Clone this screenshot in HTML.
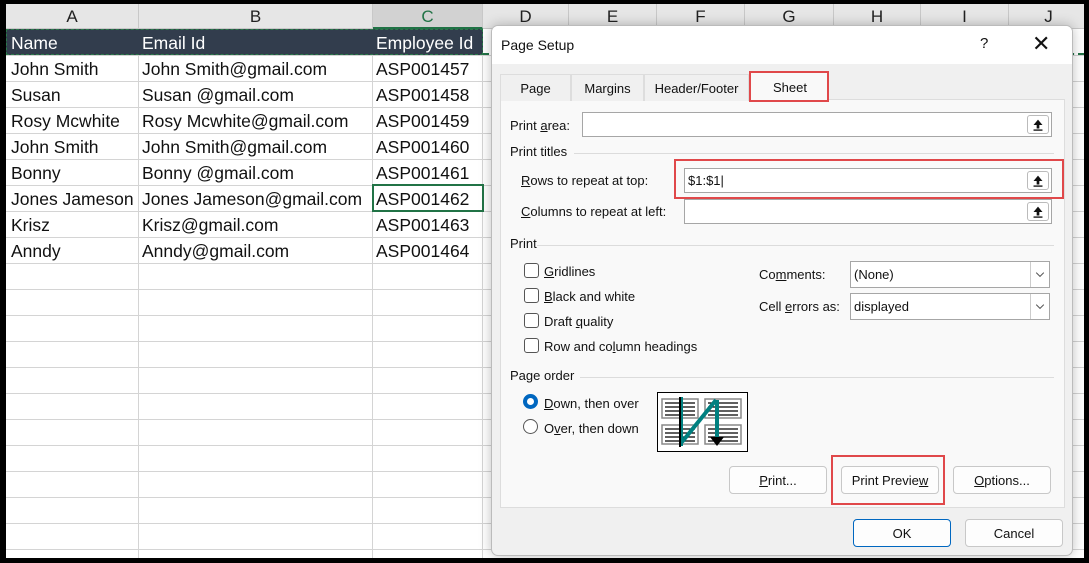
<!DOCTYPE html>
<html><head><style>
*{margin:0;padding:0;box-sizing:border-box}
body{width:1089px;height:563px;background:#000;position:relative;overflow:hidden;font-family:"Liberation Sans",sans-serif}
.a{position:absolute}
.sheet{left:6px;top:4px;width:1078px;height:554px;background:#fff;overflow:hidden}
.ch{position:absolute;top:0;height:25px;background:#e6e6e6;border-right:1px solid #c8c8c8;border-bottom:1px solid #c8c8c8;font-size:17px;color:#222;text-align:center;line-height:26px}
.vl{position:absolute;top:25px;bottom:0;width:1px;background:#d4d4d4}
.hl{position:absolute;left:0;right:0;height:1px;background:#d4d4d4}
.cell{position:absolute;font-size:17.5px;color:#111;line-height:26px;white-space:nowrap}
.dlg{left:491px;top:25px;width:582px;height:531px;background:#f0f0f0;border-radius:7px;border:1px solid #bbb;box-shadow:0 0 12px rgba(0,0,0,.25);overflow:hidden}
.t{position:absolute;font-size:13px;color:#111;white-space:nowrap}
.inp{position:absolute;background:#fff;border:1px solid #a6a6a6;height:25px}
.up{position:absolute;right:2px;top:2px;width:22px;height:19px;border:1px solid #bbb;border-radius:3px;background:#fff}
.cb{position:absolute;width:15px;height:15px;border:1px solid #555;border-radius:3px;background:#fff}
.btn{position:absolute;background:#fdfdfd;border:1px solid #c8c8c8;border-radius:4px;height:28px;font-size:13px;text-align:center;line-height:27px;color:#111}
.red{position:absolute;border:2px solid #e0484a}
.sec{position:absolute;height:1px;background:#dcdcdc}
.tab{position:absolute;top:48px;height:27px;border:1px solid #ddd;border-bottom:none;background:#f0f0f0;font-size:13px;text-align:center;line-height:28px;color:#111}
.dd{position:absolute;right:0;top:0;width:19px;height:25px;border-left:1px solid #ccc}
u{text-decoration:underline}
</style></head><body>
<div class="a sheet">
 <div class="ch" style="left:0;width:133px">A</div>
 <div class="ch" style="left:133px;width:234px">B</div>
 <div class="ch" style="left:367px;width:110px;background:#d2d2d2;color:#217346;border-bottom:2px solid #217346">C</div>
 <div class="ch" style="left:477px;width:86px">D</div>
 <div class="ch" style="left:563px;width:88px">E</div>
 <div class="ch" style="left:651px;width:88px">F</div>
 <div class="ch" style="left:739px;width:89px">G</div>
 <div class="ch" style="left:828px;width:87px">H</div>
 <div class="ch" style="left:915px;width:88px">I</div>
 <div class="ch" style="left:1003px;width:80px">J</div>
 <div class="vl" style="left:132px"></div>
 <div class="vl" style="left:366px"></div>
 <div class="vl" style="left:476px"></div>
 <div class="hl" style="top:51px"></div><div class="hl" style="top:77px"></div><div class="hl" style="top:103px"></div><div class="hl" style="top:129px"></div><div class="hl" style="top:155px"></div><div class="hl" style="top:181px"></div><div class="hl" style="top:207px"></div><div class="hl" style="top:233px"></div><div class="hl" style="top:259px"></div><div class="hl" style="top:285px"></div><div class="hl" style="top:311px"></div><div class="hl" style="top:337px"></div><div class="hl" style="top:363px"></div><div class="hl" style="top:389px"></div><div class="hl" style="top:415px"></div><div class="hl" style="top:441px"></div><div class="hl" style="top:467px"></div><div class="hl" style="top:493px"></div><div class="hl" style="top:519px"></div><div class="hl" style="top:545px"></div>
 <div class="a" style="left:0;top:25px;width:477px;height:26px;background:#323d4d;border:1.5px dashed #2a7a4a"></div>
 <div class="a" style="left:477px;top:49px;width:601px;border-top:2px dashed #217346"></div>
 <div class="cell" style="left:5px;top:26px;color:#fff">Name</div>
 <div class="cell" style="left:136px;top:26px;color:#fff">Email Id</div>
 <div class="cell" style="left:370px;top:26px;color:#fff">Employee Id</div>
 <div class="cell" style="left:5px;top:52px">John Smith</div><div class="cell" style="left:136px;top:52px">John Smith@gmail.com</div><div class="cell" style="left:370px;top:52px">ASP001457</div>
 <div class="cell" style="left:5px;top:78px">Susan</div><div class="cell" style="left:136px;top:78px">Susan @gmail.com</div><div class="cell" style="left:370px;top:78px">ASP001458</div>
 <div class="cell" style="left:5px;top:104px">Rosy Mcwhite</div><div class="cell" style="left:136px;top:104px">Rosy Mcwhite@gmail.com</div><div class="cell" style="left:370px;top:104px">ASP001459</div>
 <div class="cell" style="left:5px;top:130px">John Smith</div><div class="cell" style="left:136px;top:130px">John Smith@gmail.com</div><div class="cell" style="left:370px;top:130px">ASP001460</div>
 <div class="cell" style="left:5px;top:156px">Bonny</div><div class="cell" style="left:136px;top:156px">Bonny @gmail.com</div><div class="cell" style="left:370px;top:156px">ASP001461</div>
 <div class="cell" style="left:5px;top:182px">Jones Jameson</div><div class="cell" style="left:136px;top:182px">Jones Jameson@gmail.com</div><div class="cell" style="left:370px;top:182px">ASP001462</div>
 <div class="cell" style="left:5px;top:208px">Krisz</div><div class="cell" style="left:136px;top:208px">Krisz@gmail.com</div><div class="cell" style="left:370px;top:208px">ASP001463</div>
 <div class="cell" style="left:5px;top:234px">Anndy</div><div class="cell" style="left:136px;top:234px">Anndy@gmail.com</div><div class="cell" style="left:370px;top:234px">ASP001464</div>
 <div class="a" style="left:366px;top:180px;width:112px;height:28px;border:2px solid #217346"></div>
</div>

<svg width="0" height="0" style="position:absolute"><defs>
<symbol id="upi" viewBox="0 0 22 19"><path d="M11 4l-5 6h3.5v4h3v-4H16z" fill="#111"/><rect x="6" y="15" width="10" height="1.5" fill="#111"/></symbol>
<symbol id="chev" viewBox="0 0 19 25"><path d="M5.5 10.5l4 4 4-4" stroke="#555" stroke-width="1" fill="none"/></symbol>
</defs></svg>

<div class="a dlg">
 <div class="a" style="left:0;top:0;right:0;height:38px;background:#fff"></div>
 <div class="t" style="left:9px;top:11px;font-size:14px">Page Setup</div>
 <div class="t" style="left:488px;top:9px;font-size:15px">?</div>
 <div class="t" style="left:540px;top:5px;font-size:22px;font-weight:300">✕</div>
 <div class="a" style="left:8px;top:73px;width:565px;height:409px;background:#f9f9f9;border:1px solid #ddd"></div>
 <div class="tab" style="left:8px;width:71px">Page</div>
 <div class="tab" style="left:79px;width:73px">Margins</div>
 <div class="tab" style="left:152px;width:105px">Header/Footer</div>
 <div class="a" style="left:258px;top:46px;width:78px;height:30px;background:#f9f9f9"></div>
 <div class="t" style="left:281px;top:54px">Sheet</div>
 <div class="red" style="left:257px;top:45px;width:80px;height:31px"></div>
 <div class="t" style="left:18px;top:92px">Print <u>a</u>rea:</div>
 <div class="inp" style="left:90px;top:86px;width:470px"><svg class="up"><use href="#upi"/></svg></div>
 <div class="t" style="left:18px;top:118px">Print titles</div>
 <div class="sec" style="left:82px;top:127px;width:480px"></div>
 <div class="t" style="left:29px;top:147px"><u>R</u>ows to repeat at top:</div>
 <div class="inp" style="left:192px;top:142px;width:368px"><span class="t" style="left:3px;top:4px">$1:$1|</span><svg class="up"><use href="#upi"/></svg></div>
 <div class="red" style="left:182px;top:133px;width:390px;height:40px"></div>
 <div class="t" style="left:29px;top:178px"><u>C</u>olumns to repeat at left:</div>
 <div class="inp" style="left:192px;top:173px;width:368px"><svg class="up"><use href="#upi"/></svg></div>
 <div class="t" style="left:18px;top:210px">Print</div>
 <div class="sec" style="left:45px;top:219px;width:517px"></div>
 <div class="cb" style="left:32px;top:237px"></div><div class="t" style="left:52px;top:238px"><u>G</u>ridlines</div>
 <div class="cb" style="left:32px;top:262px"></div><div class="t" style="left:52px;top:263px"><u>B</u>lack and white</div>
 <div class="cb" style="left:32px;top:287px"></div><div class="t" style="left:52px;top:288px">Draft <u>q</u>uality</div>
 <div class="cb" style="left:32px;top:312px"></div><div class="t" style="left:52px;top:313px">Row and co<u>l</u>umn headings</div>
 <div class="t" style="left:267px;top:241px">Co<u>m</u>ments:</div>
 <div class="inp" style="left:358px;top:235px;width:200px;height:27px"><span class="t" style="left:3px;top:5px">(None)</span><svg class="dd"><use href="#chev"/></svg></div>
 <div class="t" style="left:267px;top:273px">Cell <u>e</u>rrors as:</div>
 <div class="inp" style="left:358px;top:267px;width:200px;height:27px"><span class="t" style="left:3px;top:5px">displayed</span><svg class="dd"><use href="#chev"/></svg></div>
 <div class="t" style="left:18px;top:342px">Page order</div>
 <div class="sec" style="left:88px;top:351px;width:474px"></div>
 <div class="a" style="left:31px;top:368px;width:15px;height:15px;border-radius:50%;background:#0067c0"><div class="a" style="left:4px;top:4px;width:7px;height:7px;border-radius:50%;background:#fff"></div></div>
 <div class="t" style="left:52px;top:370px"><u>D</u>own, then over</div>
 <div class="a" style="left:31px;top:393px;width:15px;height:15px;border-radius:50%;border:1px solid #555;background:#fff"></div>
 <div class="t" style="left:52px;top:395px">O<u>v</u>er, then down</div>
 <svg class="a" style="left:165px;top:366px" width="91" height="60" viewBox="0 0 91 60">
  <rect x="0.5" y="0.5" width="90" height="59" fill="#fff" stroke="#000"/>
  <g fill="#fff" stroke="#888" stroke-width="1.5">
   <rect x="5" y="7" width="36" height="19"/><rect x="48" y="7" width="36" height="19"/>
   <rect x="5" y="33" width="36" height="19"/><rect x="48" y="33" width="36" height="19"/>
  </g>
  <g stroke="#000" stroke-width="1.2">
   <path d="M8 11h30M8 15h30M8 19h30M8 23h30M51 11h30M51 15h30M51 19h30M51 23h30M8 37h30M8 41h30M8 45h30M8 49h30M51 37h30M51 41h30M51 45h30M51 49h30"/>
  </g>
  <path d="M24 5v49M25 50L59 8M60 8v40" stroke="#008080" stroke-width="4" fill="none"/>
  <path d="M23 5v50" stroke="#000" stroke-width="2"/>
  <path d="M53 45l7 9 7-9z" fill="#000"/>
 </svg>
 <div class="btn" style="left:237px;top:440px;width:98px"><u>P</u>rint...</div>
 <div class="btn" style="left:349px;top:440px;width:98px">Print Previe<u>w</u></div>
 <div class="red" style="left:339px;top:429px;width:114px;height:50px"></div>
 <div class="btn" style="left:461px;top:440px;width:98px"><u>O</u>ptions...</div>
 <div class="btn" style="left:361px;top:493px;width:98px;border-color:#0067c0">OK</div>
 <div class="btn" style="left:473px;top:493px;width:98px">Cancel</div>
</div>
</body></html>
